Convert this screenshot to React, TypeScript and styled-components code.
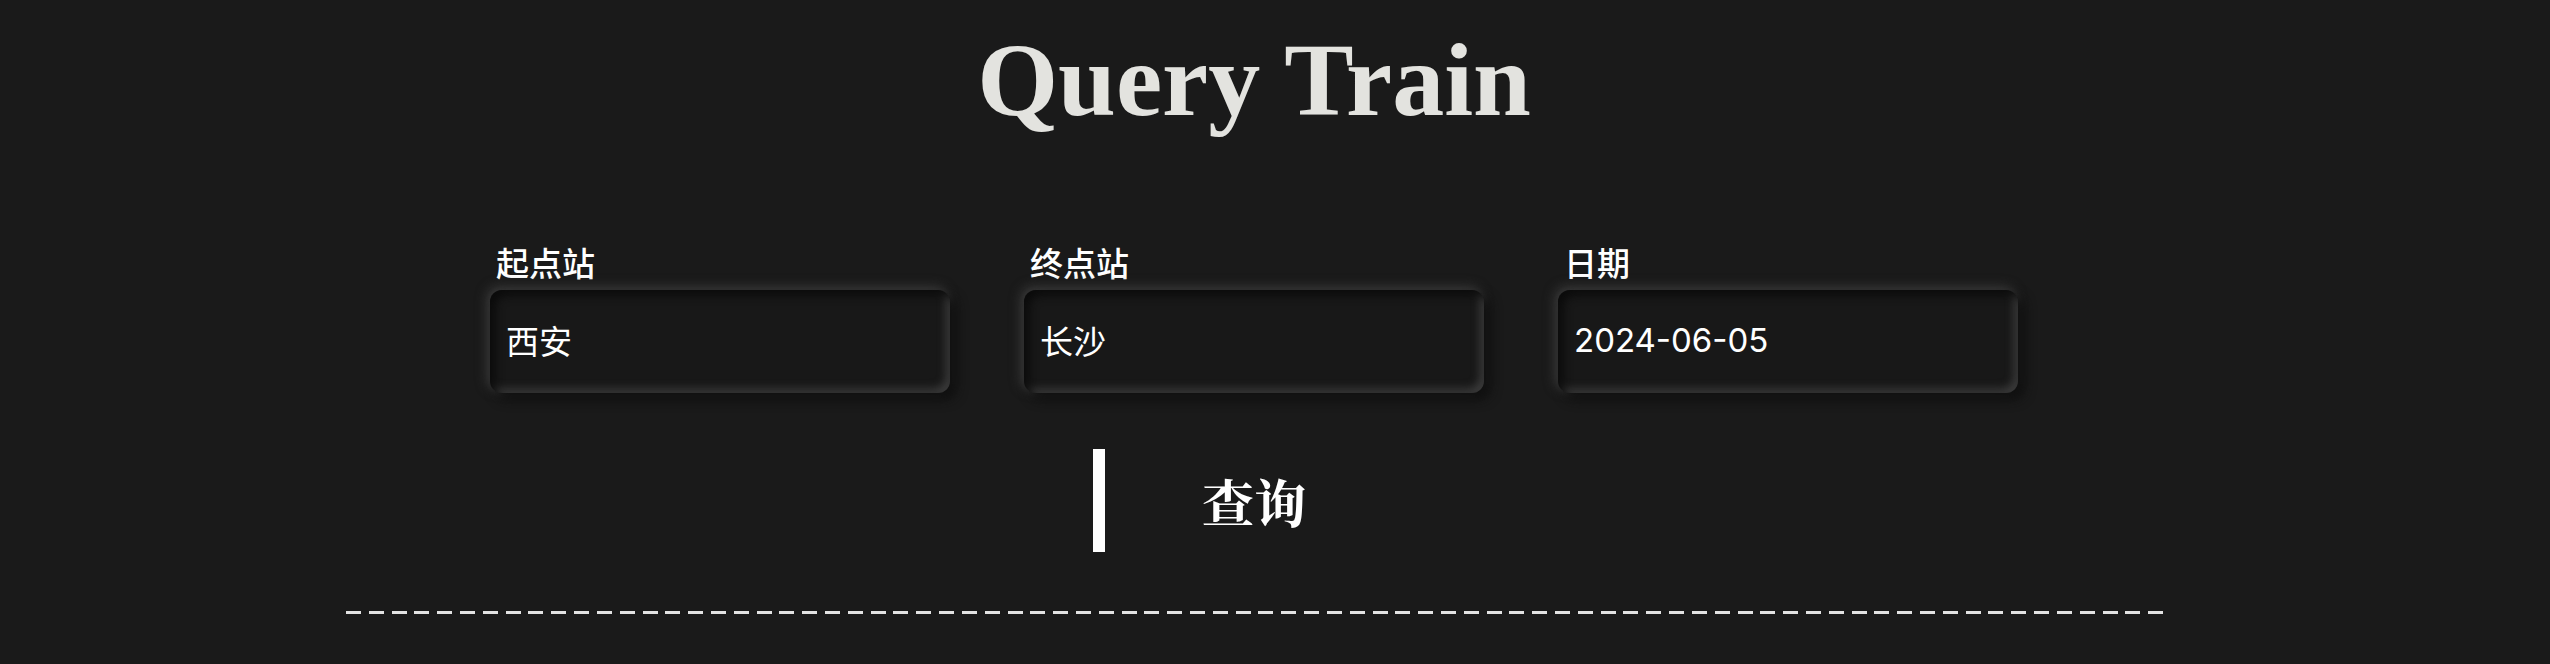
import React from 'react';
import styled, { createGlobalStyle } from 'styled-components';

const GlobalStyle = createGlobalStyle`
  html, body {
    margin: 0;
    padding: 0;
    background: #1a1a1a;
  }
  body {
    font-family: Inter, "Noto Sans CJK SC", sans-serif;
    color: #ffffff;
  }
`;

const Page = styled.main`
  width: 2508px;
  display: flex;
  flex-direction: column;
  align-items: center;
  padding-top: 28px;
`;

const Title = styled.h1`
  margin: 0;
  font-family: "Liberation Serif", "DejaVu Serif", serif;
  font-weight: 700;
  font-size: 104px;
  line-height: 1;
  color: #e3e3df;
`;

const Fields = styled.form`
  display: flex;
  gap: 74px;
  margin-top: 113px;
`;

const Field = styled.label`
  display: flex;
  flex-direction: column;
  width: 460px;
`;

const Caption = styled.span`
  font-size: 33px;
  font-weight: 500;
  line-height: 38px;
  padding-left: 6px;
  margin-bottom: 7px;
  color: #ffffff;
`;

const Input = styled.input`
  box-sizing: border-box;
  width: 460px;
  height: 103px;
  padding: 0 16px 3px;
  border: none;
  outline: none;
  border-radius: 12px;
  background: #181818;
  color: #ffffff;
  font-family: Inter, "Noto Sans CJK SC", sans-serif;
  font-size: 33px;
  font-weight: 400;
  box-shadow:
    inset 5px 5px 10px #0a0a0a,
    inset -4px -4px 9px #3e3e3e,
    6px 6px 12px #0e0e0e,
    -3px -3px 12px #3c3c3c,
    0 0 8px rgba(255, 255, 255, 0.07);
`;

const QueryButton = styled.button`
  margin-top: 56px;
  width: 322px;
  height: 103px;
  border: none;
  border-left: 12px solid #ffffff;
  background: transparent;
  color: #ffffff;
  font-family: "Noto Serif CJK SC", "Noto Sans CJK SC", serif;
  font-weight: 700;
  font-size: 52px;
  padding: 0 12px 0 0;
  cursor: pointer;
`;

const Divider = styled.hr`
  margin: 59px 0 0;
  width: 1817px;
  height: 3px;
  border: none;
  background: repeating-linear-gradient(
    to right,
    #e2e2e2 0,
    #e2e2e2 15px,
    transparent 15px,
    transparent 22.8125px
  );
`;

const fields = [
  { label: '起点站', value: '西安' },
  { label: '终点站', value: '长沙' },
  { label: '日期', value: '2024-06-05' },
];

const App: React.FC = () => {
  return (
    <>
      <GlobalStyle />
      <Page>
        <Title>Query Train</Title>
        <Fields onSubmit={(e) => e.preventDefault()}>
          {fields.map((f) => (
            <Field key={f.label}>
              <Caption>{f.label}</Caption>
              <Input type="text" defaultValue={f.value} />
            </Field>
          ))}
        </Fields>
        <QueryButton type="button">查询</QueryButton>
        <Divider />
      </Page>
    </>
  );
};

export default App;
